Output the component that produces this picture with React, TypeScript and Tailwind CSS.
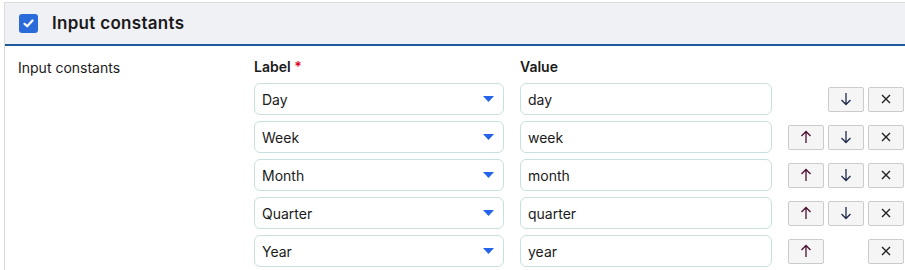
import React from 'react';

const rows = [
  { label: 'Day', value: 'day', up: false, down: true },
  { label: 'Week', value: 'week', up: true, down: true },
  { label: 'Month', value: 'month', up: true, down: true },
  { label: 'Quarter', value: 'quarter', up: true, down: true },
  { label: 'Year', value: 'year', up: true, down: false },
];

const IconButton: React.FC<{ children: React.ReactNode }> = ({ children }) => (
  <button className="w-[36px] h-[25px] flex items-center justify-center bg-[#f5f5f5] border border-[#cccccc] rounded-[2px] text-[#222]">
    {children}
  </button>
);

const ArrowUp = () => (
  <svg width="12" height="14" viewBox="0 0 12 14" fill="none" stroke="#4a1030" strokeWidth="1.3">
    <path d="M6 13V1.5M1.5 6L6 1.5L10.5 6" />
  </svg>
);

const ArrowDown = () => (
  <svg width="12" height="14" viewBox="0 0 12 14" fill="none" stroke="#1e2a4a" strokeWidth="1.3">
    <path d="M6 1V12.5M1.5 8L6 12.5L10.5 8" />
  </svg>
);

const Cross = () => (
  <svg width="10" height="10" viewBox="0 0 10 10" fill="none" stroke="#222" strokeWidth="1.4">
    <path d="M1 1L9 9M9 1L1 9" />
  </svg>
);

export default function App() {
  return (
    <div className="w-[905px] h-[270px] bg-white pt-[2px] pl-[4px] font-['Inter',sans-serif] text-[#1a1a1a]">
      <div className="border-l border-t border-[#dadada] h-full">
        {/* Header */}
        <div className="h-[43px] bg-[#f0f1f5] border-b-[2px] border-[#1d5a9c] flex items-center pl-[14px] gap-[14px]">
          <div className="w-[19px] h-[19px] rounded-[3px] bg-[#2a6bd9] flex items-center justify-center">
            <svg width="11" height="9" viewBox="0 0 11 9" fill="none" stroke="white" strokeWidth="2.2" strokeLinecap="round" strokeLinejoin="round">
              <path d="M1.5 4.8L4.2 7.3L9.5 1.5" />
            </svg>
          </div>
          <span className="text-[17px] font-semibold tracking-[0.3px]">Input constants</span>
        </div>

        {/* Body */}
        <div className="flex pt-[11px] pl-[13px]">
          <div className="w-[236px] text-[14px] leading-[20px] pt-[1px]">Input constants</div>
          <div className="flex flex-col gap-[6px]">
            <div className="flex gap-[16px] text-[14px] leading-[20px] font-semibold">
              <div className="w-[250px]">
                Label <span className="text-[#e4002b]">*</span>
              </div>
              <div className="w-[252px]">Value</div>
            </div>
            {rows.map((r) => (
              <div key={r.label} className="flex items-center h-[32px]">
                <div className="w-[250px] h-[32px] border border-[#c8e0e0] rounded-[6px] flex items-center justify-between pl-[7px] pr-[9px] text-[14px]">
                  <span>{r.label}</span>
                  <svg width="11" height="6" viewBox="0 0 11 6">
                    <path d="M0 0H11L5.5 6Z" fill="#2563eb" />
                  </svg>
                </div>
                <div className="ml-[16px] w-[252px] h-[32px] border border-[#c8e0e0] rounded-[6px] flex items-center pl-[7px] text-[14px]">
                  {r.value}
                </div>
                <div className="ml-[16px] flex gap-[4px]">
                  {r.up ? (
                    <IconButton>
                      <ArrowUp />
                    </IconButton>
                  ) : (
                    <div className="w-[36px]" />
                  )}
                  {r.down ? (
                    <IconButton>
                      <ArrowDown />
                    </IconButton>
                  ) : (
                    <div className="w-[36px]" />
                  )}
                  <IconButton>
                    <Cross />
                  </IconButton>
                </div>
              </div>
            ))}
          </div>
        </div>
      </div>
    </div>
  );
}
